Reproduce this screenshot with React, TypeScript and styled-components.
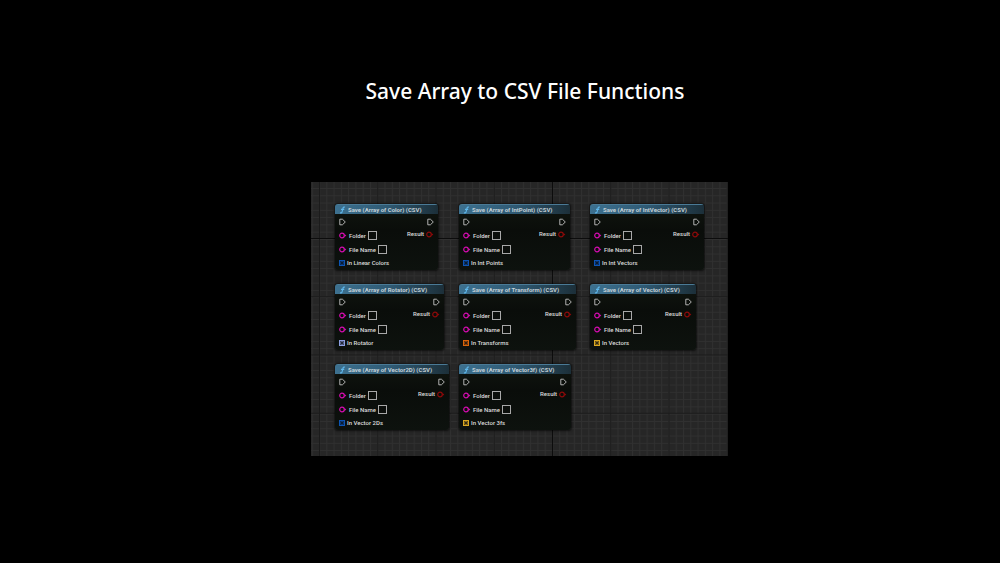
import React from "react";
import styled, { createGlobalStyle } from "styled-components";

const GlobalStyle = createGlobalStyle`
  * { box-sizing: border-box; }
  body { margin: 0; background: #000; }
`;

const Page = styled.main`
  min-height: 100vh;
  padding: 76px 0 0 0;
  display: flex;
  flex-direction: column;
  background: #000;
  font-family: Roboto, "Liberation Sans", sans-serif;
`;

const Heading = styled.h1`
  margin: 0 0 76px;
  padding-left: 5%;
  text-align: center;
  color: #fff;
  font: 500 21px/30px "Noto Sans", "Open Sans", sans-serif;
`;

const Graph = styled.section`
  position: relative;
  align-self: center;
  margin-left: 39px;
  padding: 22px 24px 26px 24px;
  background: #262626;
`;

const GridLines = styled.svg`
  position: absolute;
  inset: 0;
  width: 100%;
  height: 100%;
`;

const Nodes = styled.div`
  position: relative;
  display: grid;
  grid-template-columns: 124px 131px auto;
  row-gap: 14px;
  align-items: start;
  justify-items: start;
`;

const NodeCard = styled.article<{ $width: number }>`
  width: ${(p) => p.$width}px;
  height: 66px;
  border-radius: 3px;
  overflow: hidden;
  background: linear-gradient(#10150f, #0a0d0a 40%, #0d120e);
  box-shadow: 0 0 2px 1px rgba(0, 0, 0, 0.6);
`;

const NodeHeader = styled.header`
  height: 10px;
  padding-left: 3px;
  display: flex;
  align-items: center;
  gap: 1px;
  background: linear-gradient(90deg, #3d7190, #2f5a74 50%, #1c2f39);
  border-top: 1px solid #4a7a96;
`;

const NodeTitle = styled.h2`
  margin: 0;
  color: #c3d0d6;
  font-size: 6px;
  line-height: 8px;
  font-weight: 700;
  white-space: nowrap;
`;

const NodeBody = styled.div`
  padding: 4px 4px 0 4px;
  display: flex;
  justify-content: space-between;
`;

const Pins = styled.div<{ $end?: boolean }>`
  display: flex;
  flex-direction: column;
  align-items: ${(p) => (p.$end ? "flex-end" : "flex-start")};
`;

const PinRow = styled.div<{ $height: number }>`
  height: ${(p) => p.$height}px;
  display: flex;
  align-items: center;
  gap: 2px;
`;

const PinLabel = styled.label`
  color: #dcdcdc;
  font-size: 6px;
  line-height: 8px;
  font-weight: 500;
  white-space: nowrap;
`;

const PinInput = styled.input`
  width: 9px;
  height: 9px;
  padding: 0;
  border: 1px solid #a8a8a8;
  border-radius: 0;
  background: #0b0e0b;
  color: #d4d4d4;
  font-size: 6px;
`;

const FunctionIcon = () => (
  <svg width="9" height="8" viewBox="0 0 9 8" aria-hidden="true">
    <path d="M7 1.2C5.6.6 5.1 1.4 4.8 2.8L4.2 5.3C3.9 6.8 3.2 7.2 2 6.7M3 3.4h3.2" fill="none" stroke="#5fb7ea" strokeWidth="1.1" />
  </svg>
);

const ExecPin = () => (
  <svg width="7" height="8" viewBox="0 0 7 8" aria-hidden="true">
    <path d="M.8 1.2h2.6L6.3 4 3.4 6.8H.8z" fill="none" stroke="#c4c4c4" strokeWidth=".9" strokeLinejoin="round" />
  </svg>
);

const ValuePin = ({ color }: { color: string }) => (
  <svg width="8" height="7" viewBox="0 0 8 7" aria-hidden="true">
    <circle cx="3" cy="3.5" r="2.3" fill="none" stroke={color} strokeWidth="1.2" />
    <path d="M5.4 1.9 7.3 3.5 5.4 5.1z" fill={color} />
  </svg>
);

const ArrayPin = ({ color }: { color: string }) => (
  <svg width="6" height="6" viewBox="0 0 6 6" aria-hidden="true">
    <path d="M.6.6h4.8v4.8H.6z" fill="#0b0e10" stroke={color} strokeWidth="1.2" />
    <path d="M3 .5v1.4M3 4.1v1.4M.5 3h1.4M4.1 3h1.4" stroke={color} strokeWidth="1" />
    <path d="M2.6 2.6h.8v.8h-.8z" fill={color} />
  </svg>
);

const nodes = [
  { type: "Color", pin: "In Linear Colors", color: "#0d55b5", width: 103 },
  { type: "IntPoint", pin: "In Int Points", color: "#0d55b5", width: 111 },
  { type: "IntVector", pin: "In Int Vectors", color: "#0d55b5", width: 114 },
  { type: "Rotator", pin: "In Rotator", color: "#8d9fe0", width: 109 },
  { type: "Transform", pin: "In Transforms", color: "#d96509", width: 117 },
  { type: "Vector", pin: "In Vectors", color: "#dba922", width: 106 },
  { type: "Vector2D", pin: "In Vector 2Ds", color: "#0d55b5", width: 114 },
  { type: "Vector3f", pin: "In Vector 3fs", color: "#dba922", width: 112 },
];

const GraphNode = ({ type, pin, color, width }: (typeof nodes)[number]) => (
  <NodeCard $width={width}>
    <NodeHeader>
      <FunctionIcon />
      <NodeTitle>{`Save (Array of ${type}) (CSV)`}</NodeTitle>
    </NodeHeader>
    <NodeBody>
      <Pins>
        <PinRow $height={8}><ExecPin /></PinRow>
        {["Folder", "File Name"].map((name) => (
          <PinRow $height={name === "Folder" ? 19 : 9} key={name}>
            <ValuePin color="#d20cae" />
            <PinLabel htmlFor={`${type}-${name}`}>{name}</PinLabel>
            <PinInput id={`${type}-${name}`} />
          </PinRow>
        ))}
        <PinRow $height={17}><ArrayPin color={color} /><PinLabel as="span">{pin}</PinLabel></PinRow>
      </Pins>
      <Pins $end>
        <PinRow $height={8}><ExecPin /></PinRow>
        <PinRow $height={16}><PinLabel as="span">Result</PinLabel><ValuePin color="#8c0a0a" /></PinRow>
      </Pins>
    </NodeBody>
  </NodeCard>
);

export default function App() {
  return (
    <Page>
      <GlobalStyle />
      <Heading>Save Array to CSV File Functions</Heading>
      <Graph>
        <GridLines aria-hidden="true">
          <defs>
            <pattern id="minor" x="8" y="57" width="7.28" height="7.28" patternUnits="userSpaceOnUse">
              <path d="M.5 0v7.28M0 .5h7.28" stroke="#303030" />
            </pattern>
            <pattern id="major" x="8" y="56" width="58.25" height="58.25" patternUnits="userSpaceOnUse">
              <path d="M.5 0v58.25M0 .5h58.25" stroke="#1b1b1b" />
            </pattern>
          </defs>
          <rect width="100%" height="100%" fill="url(#minor)" />
          <rect width="100%" height="100%" fill="url(#major)" />
          <path d="M241.5 0v400M0 56.5h500" stroke="#0c0c0c" />
        </GridLines>
        <Nodes>
          {nodes.map((n) => <GraphNode key={n.type} {...n} />)}
        </Nodes>
      </Graph>
    </Page>
  );
}
